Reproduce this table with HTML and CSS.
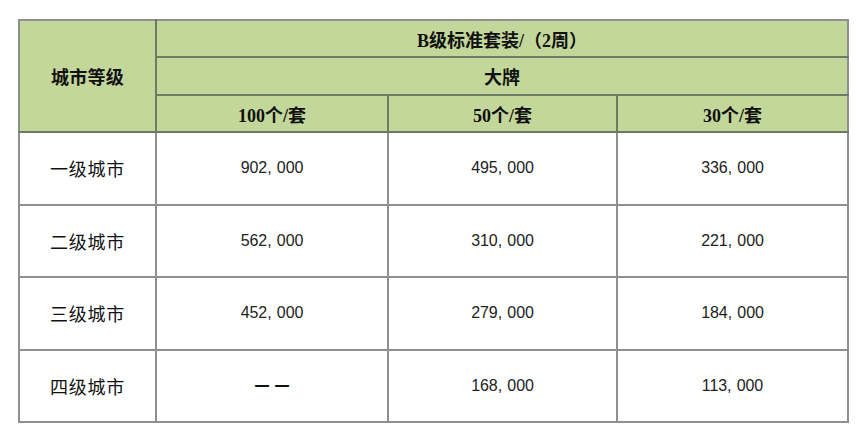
FILE: index.html
```html
<!DOCTYPE html>
<html lang="zh-CN">
<head>
<meta charset="utf-8">
<title>城市等级报价</title>
<link rel="stylesheet" href="styles.css">
</head>
<body>
<table class="price">
  <colgroup>
    <col class="c1"><col class="c2"><col class="c3"><col class="c4">
  </colgroup>
  <thead>
    <tr class="h1">
      <th rowspan="3" class="city-head">城市等级</th>
      <th colspan="3">B级标准套装/（2周）</th>
    </tr>
    <tr class="h2">
      <th colspan="3">大牌</th>
    </tr>
    <tr class="h3">
      <th>100个/套</th>
      <th>50个/套</th>
      <th>30个/套</th>
    </tr>
  </thead>
  <tbody>
    <tr>
      <td class="city">一级城市</td>
      <td class="num">902, 000</td>
      <td class="num">495, 000</td>
      <td class="num">336, 000</td>
    </tr>
    <tr>
      <td class="city">二级城市</td>
      <td class="num">562, 000</td>
      <td class="num">310, 000</td>
      <td class="num">221, 000</td>
    </tr>
    <tr>
      <td class="city">三级城市</td>
      <td class="num">452, 000</td>
      <td class="num">279, 000</td>
      <td class="num">184, 000</td>
    </tr>
    <tr>
      <td class="city">四级城市</td>
      <td class="dash">一一</td>
      <td class="num">168, 000</td>
      <td class="num">113, 000</td>
    </tr>
  </tbody>
</table>
</body>
</html>
```
FILE: styles.css
```css
html, body {
  margin: 0;
  padding: 0;
  background: #ffffff;
}

body {
  padding: 19px 0 0 18px;
}

.price {
  border-collapse: collapse;
  table-layout: fixed;
  width: 829px;
  color: #111;
  font-family: "Liberation Serif", "Noto Sans CJK SC", serif;
}

.c1 { width: 137px; }
.c2 { width: 232px; }
.c3 { width: 229px; }
.c4 { width: 231px; }

.price th,
.price td {
  border: 2px solid #8f8f8f;
  padding: 0;
  text-align: center;
  vertical-align: middle;
}

.price th {
  background: #c4d79b;
  font-weight: 700;
  font-size: 18px;
  border-color: #6f7a62;
}

.price thead tr:first-child th {
  border-top-color: #8f8f8f;
}

.price th.city-head {
  border-left-color: #8f8f8f;
  letter-spacing: 0.3px;
}

.price thead tr th:last-child {
  border-right-color: #8f8f8f;
}

.h1 th { height: 35px; }
.h2 th { height: 36px; }
.h3 th { height: 35px; }

.price td {
  height: 70.5px;
}

.city {
  font-family: "Noto Sans CJK SC", sans-serif;
  font-size: 18px;
  letter-spacing: 0.8px;
  font-weight: 400;
}

.dash {
  font-family: "Noto Sans CJK SC", sans-serif;
  font-size: 15px;
  font-weight: 700;
  letter-spacing: 5px;
  text-indent: 5px;
}

.num {
  font-family: "Liberation Sans", "Noto Sans", sans-serif;
  font-size: 16px;
  letter-spacing: -0.1px;
  word-spacing: 1px;
  color: #222;
}
```
